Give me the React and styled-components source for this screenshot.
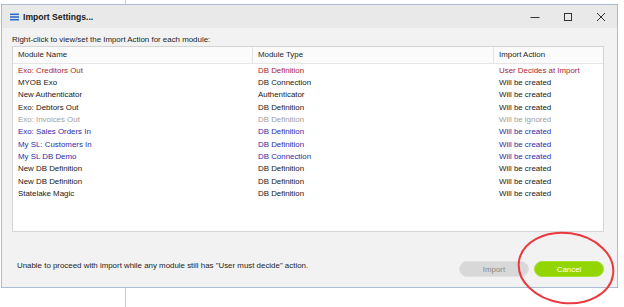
import React from "react";
import styled, { createGlobalStyle } from "styled-components";

const Global = createGlobalStyle`
  html, body { margin: 0; padding: 0; background: #ffffff; }
  body { font-family: "Liberation Sans", Arial, sans-serif; }
`;

const Desktop = styled.div`
  position: relative;
  width: 624px;
  height: 307px;
  overflow: hidden;
  box-sizing: border-box;
  padding: 4px 0 0 1px;
  background:
    linear-gradient(#c9c9c9, #c9c9c9) 125px 0 / 1px 100% no-repeat,
    #ffffff;
`;

const Window = styled.div`
  width: 617px;
  height: 284px;
  box-sizing: border-box;
  border: 1px solid #a9bcd2;
  background: #f2f2f2;
  display: flex;
  flex-direction: column;
`;

const TitleBar = styled.div`
  height: 23px;
  background: #e9e9e9;
  display: flex;
  align-items: center;
  padding-left: 8px;
  flex-shrink: 0;
`;

const TitleIcon = styled.svg`
  width: 9px;
  height: 8px;
  margin-right: 4px;
  margin-top: 1px;
`;

const TitleText = styled.div`
  font-size: 8.6px;
  font-weight: bold;
  color: #1a1a1a;
  flex: 1;
`;

const Controls = styled.div`
  display: flex;
  align-items: center;
  height: 100%;
`;

const Control = styled.div`
  width: 33px;
  height: 100%;
  display: flex;
  align-items: center;
  justify-content: center;
`;

const Body = styled.div`
  flex: 1;
  display: flex;
  flex-direction: column;
  padding: 0 13px 0 10px;
`;

const Instruction = styled.div`
  font-size: 7.9px;
  color: #1e1e1e;
  height: 18px;
  box-sizing: border-box;
  display: flex;
  align-items: flex-end;
  padding-bottom: 2px;
`;

const Table = styled.div`
  height: 186px;
  box-sizing: border-box;
  border: 1px solid #d4d4d4;
  background: #ffffff;
  display: flex;
  flex-direction: column;
`;

const grid = `
  display: grid;
  grid-template-columns: 240px 241px 1fr;
`;

const HeaderRow = styled.div`
  ${grid}
  height: 16px;
  border-bottom: 1px solid #e6e6e6;
  background: #fbfbfb;
`;

const HeaderCell = styled.div`
  font-size: 7.9px;
  color: #1e1e1e;
  line-height: 16px;
  padding-left: 5px;
  border-right: ${(p) => (p.$last ? "none" : "1px solid #e4e4e4")};
`;

const Rows = styled.div`
  padding-top: 0.5px;
`;

const Row = styled.div`
  ${grid}
  height: 12.36px;
  line-height: 12.36px;
  font-size: 7.9px;
  color: ${(p) => p.$color};
`;

const Cell = styled.div`
  padding-left: 5px;
  white-space: nowrap;
`;

const Footer = styled.div`
  display: flex;
  align-items: center;
  margin-top: 29px;
  height: 16px;
`;

const Message = styled.div`
  flex: 1;
  font-size: 7.9px;
  color: #1e1e1e;
  padding-left: 5px;
  margin-top: -7px;
`;

const Button = styled.div`
  width: 70px;
  height: 16px;
  box-sizing: border-box;
  border-radius: 8px;
  display: flex;
  align-items: center;
  justify-content: center;
  font-size: 7.9px;
  margin-left: ${(p) => (p.$gap ? "5px" : "0")};
  background: ${(p) => (p.$primary ? "#93d500" : "#d8d8d8")};
  color: ${(p) => (p.$primary ? "#ffffff" : "#8a8a8a")};
  border: 1px solid ${(p) => (p.$primary ? "#a8df3a" : "#e2e2e2")};
`;

const Annotation = styled.svg`
  position: absolute;
  left: 510px;
  top: 228px;
  width: 112px;
  height: 79px;
  pointer-events: none;
`;

const COLORS = {
  red: "#a8252f",
  black: "#202020",
  gray: "#a0a0a0",
  blue: "#2c2ca6",
};

const rows = [
  ["Exo: Creditors Out", "DB Definition", "User Decides at Import", "red"],
  ["MYOB Exo", "DB Connection", "Will be created", "black"],
  ["New Authenticator", "Authenticator", "Will be created", "black"],
  ["Exo: Debtors Out", "DB Definition", "Will be created", "black"],
  ["Exo: Invoices Out", "DB Definition", "Will be ignored", "gray"],
  ["Exo: Sales Orders In", "DB Definition", "Will be created", "blue"],
  ["My SL: Customers In", "DB Definition", "Will be created", "blue"],
  ["My SL DB Demo", "DB Connection", "Will be created", "blue"],
  ["New DB Definition", "DB Definition", "Will be created", "black"],
  ["New DB Definition", "DB Definition", "Will be created", "black"],
  ["Statelake Magic", "DB Definition", "Will be created", "black"],
];

export default function App() {
  return (
    <>
      <Global />
      <Desktop>
        <Window>
          <TitleBar>
            <TitleIcon viewBox="0 0 9 8">
              <rect x="0" y="0.5" width="9" height="1.6" fill="#2a6fc9" />
              <rect x="0" y="3.2" width="9" height="1.6" fill="#2a6fc9" />
              <rect x="0" y="5.9" width="9" height="1.6" fill="#2a6fc9" />
            </TitleIcon>
            <TitleText>Import Settings...</TitleText>
            <Controls>
              <Control>
                <svg width="10" height="10" viewBox="0 0 10 10">
                  <line x1="0.5" y1="5.5" x2="9.5" y2="5.5" stroke="#333" strokeWidth="1" />
                </svg>
              </Control>
              <Control>
                <svg width="10" height="10" viewBox="0 0 10 10">
                  <rect x="1.5" y="1.5" width="7" height="7" fill="none" stroke="#333" strokeWidth="1" />
                </svg>
              </Control>
              <Control>
                <svg width="10" height="10" viewBox="0 0 10 10">
                  <path d="M1 1 L9 9 M9 1 L1 9" stroke="#333" strokeWidth="1" />
                </svg>
              </Control>
            </Controls>
          </TitleBar>
          <Body>
            <Instruction>Right-click to view/set the Import Action for each module:</Instruction>
            <Table>
              <HeaderRow>
                <HeaderCell>Module Name</HeaderCell>
                <HeaderCell>Module Type</HeaderCell>
                <HeaderCell $last>Import Action</HeaderCell>
              </HeaderRow>
              <Rows>
                {rows.map((r, i) => (
                  <Row key={i} $color={COLORS[r[3]]}>
                    <Cell>{r[0]}</Cell>
                    <Cell>{r[1]}</Cell>
                    <Cell>{r[2]}</Cell>
                  </Row>
                ))}
              </Rows>
            </Table>
            <Footer>
              <Message>
                Unable to proceed with import while any module still has "User must decide" action.
              </Message>
              <Button>Import</Button>
              <Button $primary $gap>Cancel</Button>
            </Footer>
          </Body>
        </Window>
        <Annotation viewBox="0 0 112 79">
          <ellipse cx="56" cy="40" rx="47.5" ry="35" fill="none" stroke="#ea3a3f" strokeWidth="2" transform="rotate(8 56 40)" />
        </Annotation>
      </Desktop>
    </>
  );
}
